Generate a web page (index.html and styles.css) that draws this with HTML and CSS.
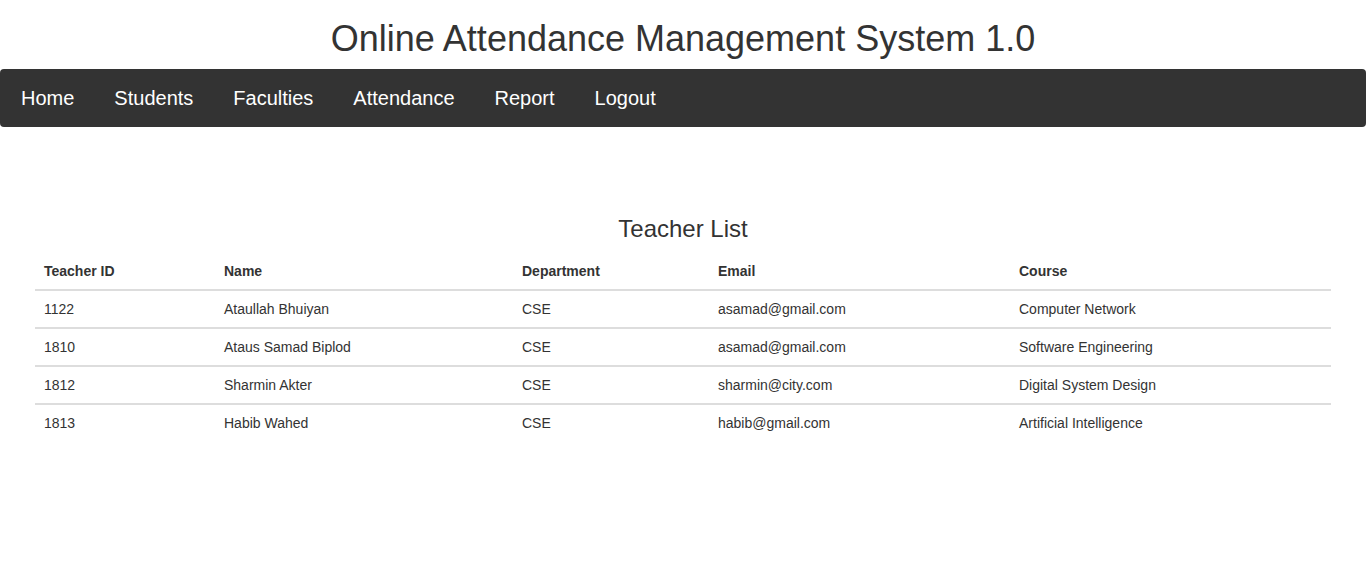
FILE: index.html
```html
<!DOCTYPE html>
<html lang="en">
<head>
<meta charset="utf-8">
<title>Online Attendance Management System 1.0</title>
<link rel="stylesheet" href="styles.css">
</head>
<body>
<header class="site-header">
  <h1 class="site-title">Online Attendance Management System 1.0</h1>
  <nav class="main-nav">
    <ul class="nav-list">
      <li><a href="#">Home</a></li>
      <li><a href="#">Students</a></li>
      <li><a href="#">Faculties</a></li>
      <li><a href="#">Attendance</a></li>
      <li><a href="#">Report</a></li>
      <li><a href="#">Logout</a></li>
    </ul>
  </nav>
</header>
<main class="content">
  <h3 class="list-title">Teacher List</h3>
  <table class="data-table">
    <colgroup>
      <col class="col-id">
      <col class="col-name">
      <col class="col-dept">
      <col class="col-email">
      <col class="col-course">
    </colgroup>
    <thead>
      <tr>
        <th>Teacher ID</th>
        <th>Name</th>
        <th>Department</th>
        <th>Email</th>
        <th>Course</th>
      </tr>
    </thead>
    <tbody>
      <tr>
        <td>1122</td>
        <td>Ataullah Bhuiyan</td>
        <td>CSE</td>
        <td>asamad@gmail.com</td>
        <td>Computer Network</td>
      </tr>
      <tr>
        <td>1810</td>
        <td>Ataus Samad Biplod</td>
        <td>CSE</td>
        <td>asamad@gmail.com</td>
        <td>Software Engineering</td>
      </tr>
      <tr>
        <td>1812</td>
        <td>Sharmin Akter</td>
        <td>CSE</td>
        <td>sharmin@city.com</td>
        <td>Digital System Design</td>
      </tr>
      <tr>
        <td>1813</td>
        <td>Habib Wahed</td>
        <td>CSE</td>
        <td>habib@gmail.com</td>
        <td>Artificial Intelligence</td>
      </tr>
    </tbody>
  </table>
</main>
</body>
</html>
```

FILE: styles.css
```css
* {
  box-sizing: border-box;
}

html, body {
  margin: 0;
  padding: 0;
  background: #fff;
}

body {
  font-family: "Liberation Sans", Arial, Helvetica, sans-serif;
  font-size: 14px;
  line-height: 20px;
  color: #333;
}

.site-title {
  margin: 19px 0 10px;
  font-size: 36px;
  font-weight: 500;
  line-height: 1.1;
  text-align: center;
  color: #333;
}

.main-nav {
  background: #333;
  border-radius: 4px;
  height: 58px;
}

.nav-list {
  list-style: none;
  margin: 0;
  padding: 0 0 0 1px;
  display: flex;
  height: 100%;
}

.nav-list li {
  display: flex;
}

.nav-list a {
  display: flex;
  align-items: center;
  padding: 0 20px;
  font-size: 20px;
  color: #fff;
  text-decoration: none;
}

.content {
  padding: 89px 35px 0;
}

.list-title {
  margin: 0 0 11px;
  font-size: 24px;
  font-weight: 500;
  line-height: 26px;
  text-align: center;
  color: #333;
}

.data-table {
  width: 100%;
  border-collapse: collapse;
  table-layout: fixed;
  font-size: 14px;
}

.col-id { width: 180px; }
.col-name { width: 298px; }
.col-dept { width: 196px; }
.col-email { width: 301px; }
.col-course { width: 321px; }

.data-table th,
.data-table td {
  padding: 8px 8px 8px 9px;
  line-height: 20px;
  text-align: left;
  vertical-align: top;
}

.data-table th {
  font-weight: bold;
  border-bottom: 2px solid #ddd;
}

.data-table tbody tr + tr td {
  border-top: 2px solid #ddd;
}
```
